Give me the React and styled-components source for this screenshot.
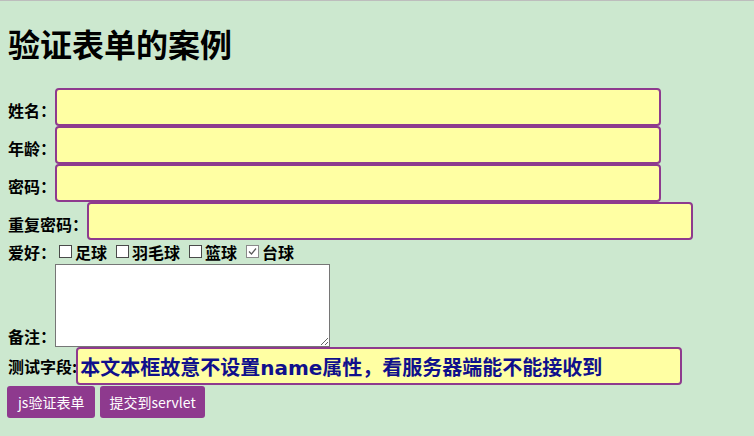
import React from "react";
import styled, { createGlobalStyle } from "styled-components";

const Global = createGlobalStyle`
  html, body {
    margin: 0;
    padding: 0;
    background: #cce8cf;
  }
  body {
    border-top: 1px solid #bdbdbd;
    font-family: "Noto Sans CJK SC", "DejaVu Sans", sans-serif;
  }
`;

const Page = styled.div`
  padding: 0 8px;
`;

const Title = styled.h1`
  margin: 22px 0 25px;
  font-size: 32px;
  line-height: 40px;
  font-weight: bold;
  color: #000;
`;

const Form = styled.form`
  display: flex;
  flex-direction: column;
  align-items: flex-start;
`;

const Row = styled.div`
  display: flex;
  align-items: ${(p) => p.align || "center"};
  height: ${(p) => p.h || 38}px;
`;

const Label = styled.span`
  font-size: 16px;
  font-weight: bold;
  line-height: 22px;
  color: #000;
  white-space: nowrap;
  padding-top: ${(p) => p.pt || 0}px;
`;

const TextInput = styled.input`
  box-sizing: border-box;
  width: 606px;
  height: 38px;
  margin: 0 0 0 -1px;
  padding: 0 2px;
  background: #ffffa3;
  border: 2px solid #8e3a8e;
  border-radius: 4px;
  outline: none;
  font-family: "DejaVu Sans", "Noto Sans CJK SC", sans-serif;
  font-size: ${(p) => p.fs || 16}px;
  font-weight: bold;
  color: #10108c;
`;

const Hobbies = styled.div`
  display: flex;
  align-items: center;
  margin-left: 3px;
`;

const Hobby = styled.label`
  display: flex;
  align-items: center;
  margin-right: 9px;
  font-size: 16px;
  font-weight: bold;
  line-height: 22px;
`;

const Box = styled.span`
  display: inline-flex;
  align-items: center;
  justify-content: center;
  width: 13px;
  height: 13px;
  box-sizing: border-box;
  border: 1px solid;
  border-color: ${(p) => (p.checked ? "#8a8a8a" : "#4a4a4a")};
  background: #fff;
  margin-right: 3px;
`;

const Memo = styled.textarea`
  box-sizing: border-box;
  width: 275px;
  height: 83px;
  margin: 1px 0 0 -1px;
  border: 1px solid #767676;
  background: #fff;
  resize: both;
  outline: none;
`;

const Buttons = styled.div`
  display: flex;
  gap: 5px;
  margin-top: 1px;
  margin-left: -1px;
`;

const Button = styled.button`
  height: 32px;
  padding: 0 ${(p) => p.px || 10}px;
  border: none;
  border-radius: 3px;
  background: #8e3a8e;
  color: #fff;
  font-family: "Noto Sans CJK SC", "DejaVu Sans", sans-serif;
  font-size: 14px;
  cursor: pointer;
`;

const Check = () => (
  <svg width="9" height="9" viewBox="0 0 9 9">
    <path d="M1 4.5 L3.5 7 L8 1.5" fill="none" stroke="#5a5a5a" strokeWidth="1.2" />
  </svg>
);

const hobbies = [
  { name: "足球" },
  { name: "羽毛球" },
  { name: "篮球" },
  { name: "台球", checked: true },
];

export default function App() {
  return (
    <Page>
      <Global />
      <Title>验证表单的案例</Title>
      <Form onSubmit={(e) => e.preventDefault()}>
        <Row>
          <Label pt={5}>姓名：</Label>
          <TextInput type="text" />
        </Row>
        <Row>
          <Label pt={5}>年龄：</Label>
          <TextInput type="text" />
        </Row>
        <Row>
          <Label pt={5}>密码：</Label>
          <TextInput type="password" />
        </Row>
        <Row>
          <Label pt={5}>重复密码：</Label>
          <TextInput type="password" />
        </Row>
        <Row h={23}>
          <Label>爱好：</Label>
          <Hobbies>
            {hobbies.map((h) => (
              <Hobby key={h.name}>
                <Box checked={h.checked}>{h.checked && <Check />}</Box>
                {h.name}
              </Hobby>
            ))}
          </Hobbies>
        </Row>
        <Row h={84} align="flex-end">
          <Label>备注：</Label>
          <Memo />
        </Row>
        <Row>
          <Label>测试字段:</Label>
          <TextInput
            type="text"
            fs={20}
            defaultValue="本文本框故意不设置name属性，看服务器端能不能接收到"
          />
        </Row>
        <Buttons>
          <Button type="button" px={11}>js验证表单</Button>
          <Button type="submit" px={9}>提交到servlet</Button>
        </Buttons>
      </Form>
    </Page>
  );
}
